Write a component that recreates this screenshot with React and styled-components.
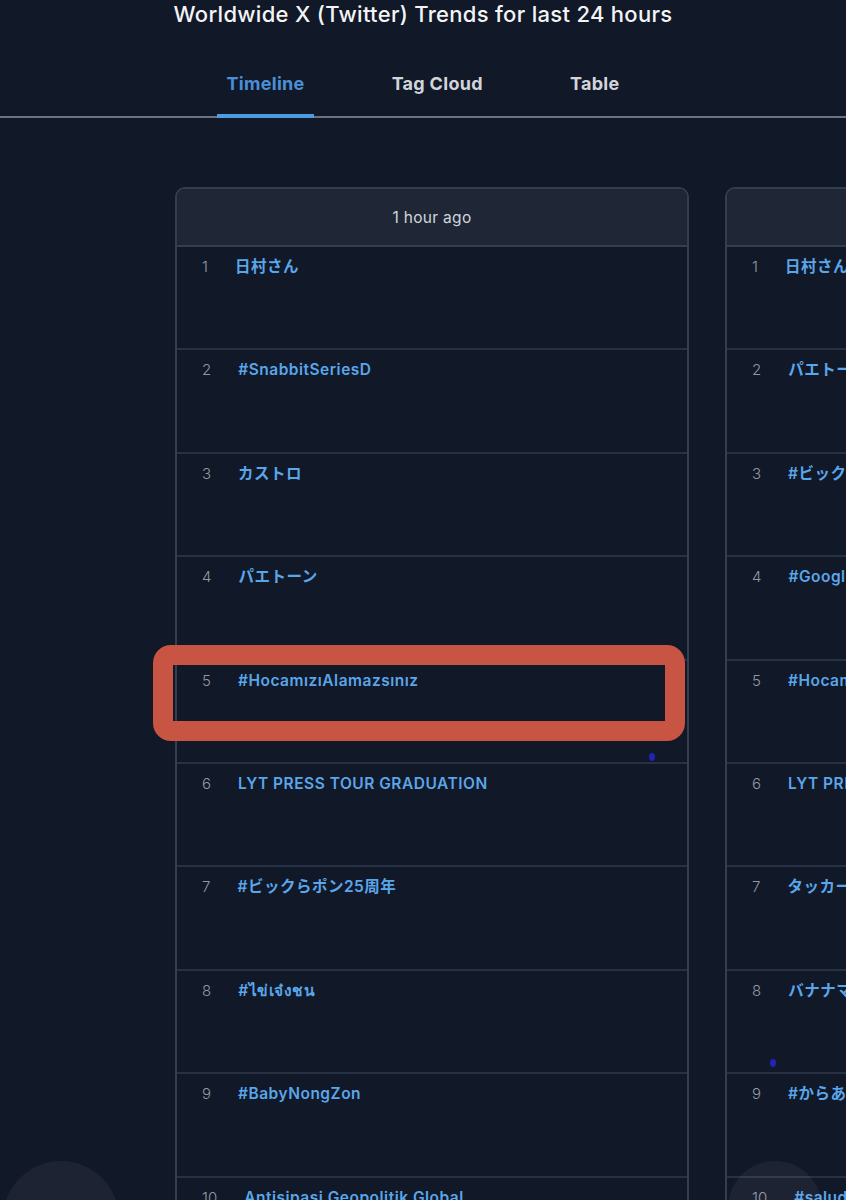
import React from 'react'
import styled, { createGlobalStyle } from 'styled-components'

const GlobalStyle = createGlobalStyle`
  html, body {
    margin: 0;
    padding: 0;
    background: #111827;
  }
  body {
    font-family: Inter, "Noto Sans", "Noto Sans CJK JP", sans-serif;
    color: #e5e7eb;
    overflow: hidden;
  }
`;

const Page = styled.div`
  position: relative;
  width: 846px;
  height: 1200px;
  overflow: hidden;
  background: #111827;
`;

const Header = styled.header`
  display: flex;
  flex-direction: column;
  align-items: center;
`;

const Title = styled.h1`
  margin: 0;
  font-size: 22px;
  line-height: 28px;
  font-weight: 500;
  color: #f3f4f6;
  letter-spacing: 0.3px;
`;

const Tabs = styled.nav`
  margin-top: 32px;
  width: 100%;
  display: flex;
  justify-content: center;
  gap: 69px;
  border-bottom: 2px solid #6b7280;
`;

const Tab = styled.div`
  padding: 12px 9px 18px;
  margin-bottom: -2px;
  font-size: 18px;
  line-height: 24px;
  font-weight: 700;
  letter-spacing: 0.3px;
  color: ${p => (p.$active ? '#4b8fd6' : '#d1d5db')};
  border-bottom: 4px solid ${p => (p.$active ? '#4e9be0' : 'transparent')};
`;

const Strip = styled.div`
  display: flex;
  gap: 36px;
  margin-top: 69px;
  padding-left: 175px;
`;

const Card = styled.section`
  flex: 0 0 514px;
  border: 2px solid #343e50;
  border-radius: 10px;
  overflow: hidden;
  box-sizing: border-box;
`;

const CardHead = styled.div`
  height: 56px;
  display: flex;
  align-items: center;
  justify-content: center;
  background: #1f2737;
  border-bottom: 2px solid #343e50;
  font-size: 15.5px;
  color: #d1d5db;
  letter-spacing: 0.3px;
`;

const Row = styled.div`
  height: 103.4px;
  display: flex;
  align-items: flex-start;
  padding: 9px 0 0 25px;
  box-sizing: border-box;
  border-bottom: 2px solid #283143;
  &:last-child { border-bottom: 0; }
`;

const Rank = styled.span`
  font-size: 15px;
  line-height: 22px;
  font-weight: 300;
  color: #9198a5;
  margin-right: 27px;
`;

const Trend = styled.span`
  font-size: 15.5px;
  line-height: 22px;
  font-weight: 600;
  color: #5aa6ea;
  letter-spacing: 0.5px;
  white-space: nowrap;
`;

const Highlight = styled.div`
  position: absolute;
  left: 153px;
  top: 645px;
  width: 532px;
  height: 96px;
  box-sizing: border-box;
  border: 20px solid #c85443;
  border-radius: 18px;
  pointer-events: none;
`;

const Dot = styled.div`
  position: absolute;
  width: 6px;
  height: 8px;
  border-radius: 50%;
  background: #2323b8;
`;

const Bubble = styled.div`
  position: absolute;
  top: 1161px;
  border-radius: 50%;
  background: rgba(255, 255, 255, 0.05);
`;

const left = [
  '日村さん',
  '#SnabbitSeriesD',
  'カストロ',
  'パエトーン',
  '#HocamızıAlamazsınız',
  'LYT PRESS TOUR GRADUATION',
  '#ビックらポン25周年',
  '#ไข่เจ๋งชน',
  '#BabyNongZon',
  'Antisipasi Geopolitik Global',
]

const right = [
  '日村さん',
  'パエトーン',
  '#ビックらポン25周年',
  '#GoogleDoodle',
  '#HocamızıAlamazsınız',
  'LYT PRESS TOUR GRADUATION',
  'タッカーカールソン',
  'バナナマン',
  '#からあげの日',
  '#salud',
]

const TrendCard = ({ label, items }) => (
  <Card>
    <CardHead>{label}</CardHead>
    {items.map((t, i) => (
      <Row key={i}>
        <Rank>{i + 1}</Rank>
        <Trend>{t}</Trend>
      </Row>
    ))}
  </Card>
)

export default function App() {
  return (
    <Page>
      <GlobalStyle />
      <Header>
        <Title>Worldwide X (Twitter) Trends for last 24 hours</Title>
        <Tabs>
          <Tab $active>Timeline</Tab>
          <Tab>Tag Cloud</Tab>
          <Tab>Table</Tab>
        </Tabs>
      </Header>

      <Strip>
        <TrendCard label="1 hour ago" items={left} />
        <TrendCard label="2 hours ago" items={right} />
      </Strip>

      <Highlight />
      <Dot style={{ left: 649, top: 753 }} />
      <Dot style={{ left: 770, top: 1059 }} />
      <Bubble style={{ left: 3, width: 116, height: 116 }} />
      <Bubble style={{ left: 728, width: 94, height: 94 }} />
    </Page>
  )
}
